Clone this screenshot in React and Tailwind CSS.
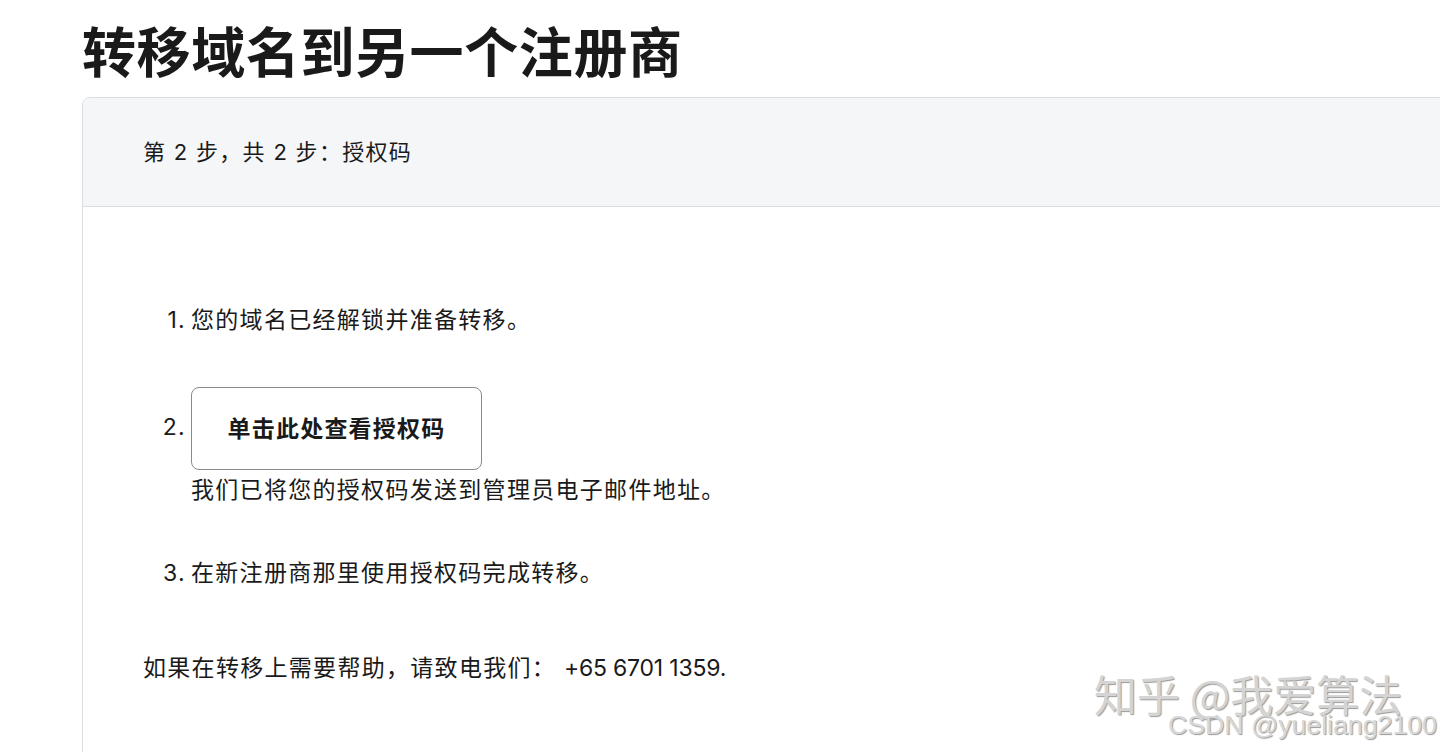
export default function App() {
  const font = { fontFamily: '"Inter", "Noto Sans CJK SC", sans-serif' };
  return (
    <div className="relative w-[1440px] h-[752px] overflow-hidden bg-white text-[#1a1a1a]" style={font}>
      <div className="pl-[82px] pt-[21px]">
        <h1 className="text-[54px] leading-[65px] font-bold tracking-[0.6px] m-0">转移域名到另一个注册商</h1>
        <div className="mt-[11px] mr-[-20px] border border-[#dcdde0] rounded-tl-[8px] h-[700px]">
          <div className="h-[109px] bg-[#f5f6f8] border-b border-[#dcdde0] rounded-tl-[8px] flex items-center pl-[60px] text-[22px] tracking-[1.3px]">
            第 2 步，共 2 步：授权码
          </div>
          <div className="pl-[60px] pt-[97px] text-[23px] leading-[32px] tracking-[1.3px]">
            <div className="flex">
              <span className="w-[48px] pr-[5px] text-right">1.</span>
              <span>您的域名已经解锁并准备转移。</span>
            </div>
            <div className="flex mt-[51px]">
              <span className="w-[48px] pr-[5px] text-right mt-[24px]">2.</span>
              <div className="flex flex-col items-start">
                <button className="h-[83px] w-[291px] border border-[#8a8a8a] rounded-[8px] bg-white font-bold text-[23px] tracking-[1.2px] flex items-center justify-center">
                  单击此处查看授权码
                </button>
                <span className="mt-[4px]">我们已将您的授权码发送到管理员电子邮件地址。</span>
              </div>
            </div>
            <div className="flex mt-[51px]">
              <span className="w-[48px] pr-[5px] text-right">3.</span>
              <span>在新注册商那里使用授权码完成转移。</span>
            </div>
            <div className="mt-[63px]">
              如果在转移上需要帮助，请致电我们： <span className="tracking-[-0.2px]">+65 6701 1359.</span>
            </div>
          </div>
        </div>
      </div>
      <div className="absolute left-[1094px] top-[663px] text-[43px] leading-[60px] text-[#d4d4d4] [text-shadow:1px_1px_1px_#9a9a9a] whitespace-nowrap" style={{ fontFamily: '"Noto Sans CJK SC", sans-serif' }}>
        知乎 @我爱算法
      </div>
      <div className="absolute left-[1168px] top-[707px] text-[26.7px] leading-[36px] text-[#d8d8d8] [text-shadow:1px_1px_1px_#9a9a9a] whitespace-nowrap" style={{ fontFamily: '"Liberation Sans", sans-serif' }}>
        CSDN @yueliang2100
      </div>
    </div>
  );
}
